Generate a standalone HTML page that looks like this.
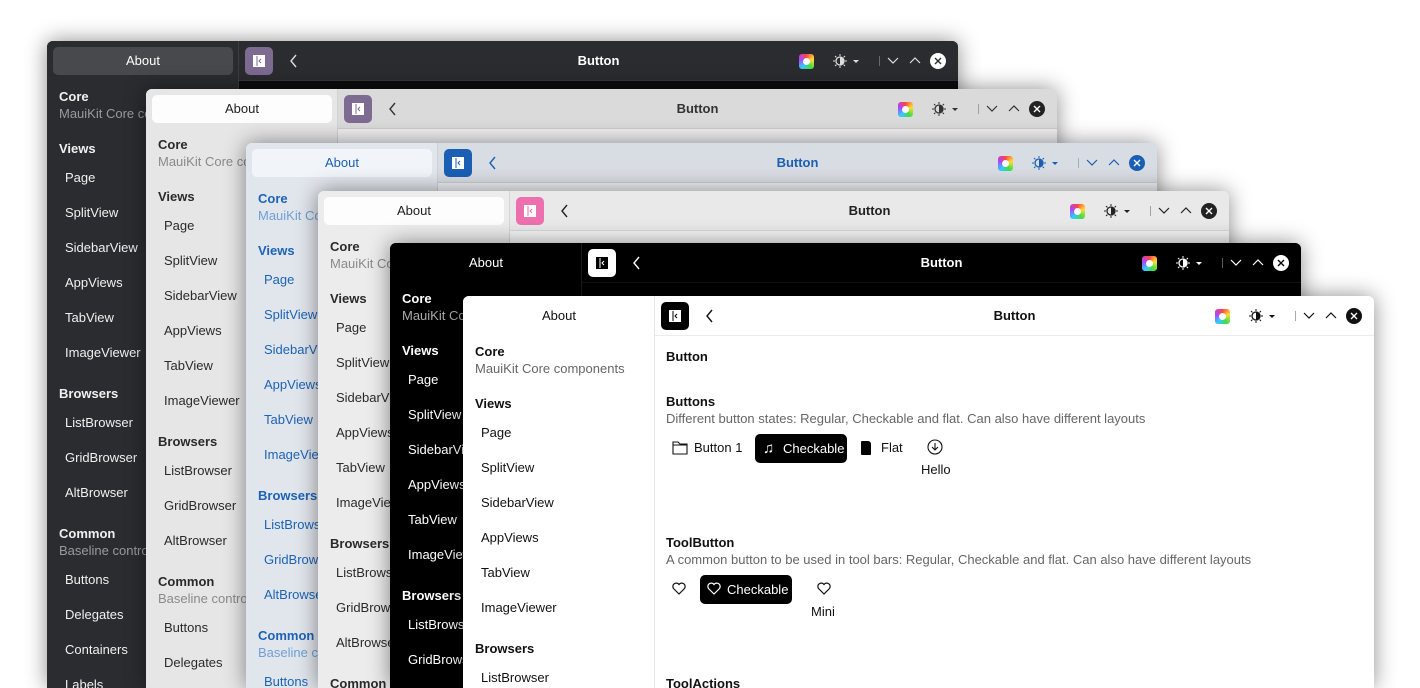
<!DOCTYPE html>
<html style="width:1420px;height:688px;overflow:hidden"><head><meta charset="utf-8"><style>
*{box-sizing:border-box;margin:0;padding:0}
body{width:1420px;height:688px;background:#fff;position:relative;overflow:hidden;font-family:"Liberation Sans","Noto Sans CJK SC",sans-serif;font-size:13px}
.win{position:absolute;width:911px;border-radius:6px 6px 0 0;overflow:hidden;box-shadow:0 0 22px rgba(0,0,0,.45)}
.side{position:absolute;left:0;top:0;width:192px;bottom:0;overflow:hidden}
.main{position:absolute;left:192px;right:0;top:0;bottom:0;overflow:hidden}
.hdr{position:absolute;left:0;right:0;top:0;height:40px}
.about{position:absolute;left:6px;top:6px;width:180px;height:28px;border-radius:5px;text-align:center;line-height:28px}
.t{position:absolute;white-space:nowrap}
.tog{position:absolute;left:6px;top:6px;width:28px;height:28px;border-radius:5px}
.btn1{position:absolute;border-radius:5px;background:#000;color:#fff;height:29px;line-height:29px}
</style></head><body>
<div id="root"></div>
<script>
var items=[["h","Core",56],["s","MauiKit Core components",73],["h","Views",108],["i","Page",137],["i","SplitView",172],["i","SidebarView",207],["i","AppViews",242],["i","TabView",277],["i","ImageViewer",312],["h","Browsers",353],["i","ListBrowser",382],["i","GridBrowser",417],["i","AltBrowser",452],["h","Common",493],["s","Baseline controls",510],["i","Buttons",539],["i","Delegates",574],["i","Containers",609],["i","Labels",644]];
var W=[
{x:47,y:41,side:"#2b2c30",hdr:"#2b2c30",main:"#0c0c0e",ab:"#47494d",abt:"#fff",tx:"#f0f0f0",sub:"#9a9a9e",tog:"#7e6b92",ttl:"#fff",ic:"#ddd",close:"#fff",closeX:"#2b2c30"},
{x:146,y:89,side:"#e6e6e6",hdr:"#dadada",main:"#efefef",ab:"#fdfdfd",abt:"#222",tx:"#2a2a2a",sub:"#8a8a8a",tog:"#7e6b92",ttl:"#333",ic:"#333",close:"#222",closeX:"#fff"},
{x:246,y:143,side:"#e1e6ec",hdr:"#d8dde3",main:"#eef1f4",ab:"#f1f5fa",abt:"#1a5fb4",tx:"#1c63b7",sub:"#6f9fd6",tog:"#1a5fb4",ttl:"#1a5fb4",ic:"#1a5fb4",close:"#1a5fb4",closeX:"#fff"},
{x:318,y:191,side:"#ececed",hdr:"#e9e9ea",main:"#f5f5f5",ab:"#fdfdfd",abt:"#222",tx:"#2a2a2a",sub:"#8a8a8a",tog:"#ee6fae",ttl:"#222",ic:"#222",close:"#222",closeX:"#fff"},
{x:390,y:243,side:"#000",hdr:"#000",main:"#000",ab:"#000",abt:"#fff",tx:"#fff",sub:"#aaa",tog:"#fff",ttl:"#fff",ic:"#fff",close:"#fff",closeX:"#000",togi:"#000",togc:"#fff"},
{x:463,y:296,side:"#fff",hdr:"#fff",main:"#fff",ab:"#fff",abt:"#111",tx:"#111",sub:"#666",tog:"#000",ttl:"#111",ic:"#111",close:"#111",closeX:"#fff"}];
var h="";
W.forEach(function(w,k){
 var s='<div class="win" style="left:'+w.x+'px;top:'+w.y+'px;height:'+(688-w.y)+'px;background:'+w.main+'">';
 s+='<div class="side" style="background:'+w.side+';border-right:1px solid rgba(128,128,128,.2)"><div class="about" style="background:'+w.ab+';color:'+w.abt+'">About</div>';
 items.forEach(function(it){
  var l=it[0]=="i"?18:12,c=it[0]=="s"?w.sub:w.tx,fw=it[0]=="h"?"bold":"normal";
  s+='<div class="t" style="left:'+l+'px;top:'+(it[2]-8)+'px;color:'+c+';font-weight:'+fw+'">'+it[1]+'</div>';
 });
 s+='</div><div class="main"><div class="hdr" style="background:'+w.hdr+';border-bottom:1px solid rgba(128,128,128,.15)">';
 s+='<div class="tog" style="background:'+w.tog+'"><svg style="position:absolute;left:8px;top:8px" width="12" height="12"><rect width="12" height="12" fill="'+(w.togi||"#fff")+'"/><path d="M4 1v10" stroke="'+(w.togc||w.tog)+'" stroke-width="1"/><path d="M8 4L6 6l2 2" fill="none" stroke="'+(w.togc||w.tog)+'" stroke-width="1"/></svg></div>';
 s+='<svg style="position:absolute;left:50px;top:13px" width="10" height="14"><path d="M7 1L2 7l5 6" fill="none" stroke="'+w.ic+'" stroke-width="1.4"/></svg>';
 s+='<div class="t" style="left:0;right:0;text-align:center;top:12px;font-weight:bold;color:'+w.ttl+'">Button</div>';
 s+='<div style="position:absolute;right:144px;top:13px;width:15px;height:15px;border-radius:3px;background:conic-gradient(#f44,#fd3,#4d4,#3cf,#a4f,#f44)"><div style="position:absolute;left:4px;top:4px;width:7px;height:7px;border-radius:50%;background:#fff"></div></div>';
 s+='<svg style="position:absolute;right:95px;top:13px" width="30" height="14"><circle cx="7" cy="7" r="4" fill="none" stroke="'+w.ic+'" stroke-width="1.3"/><path d="M7 3v8a4 4 0 0 0 0-8" fill="'+w.ic+'"/><path d="M7 0v2M7 12v2M0 7h2M12 7h2M2 2l1.4 1.4M10.6 10.6L12 12M2 12l1.4-1.4M10.6 3.4L12 2" stroke="'+w.ic+'" stroke-width="1"/><path d="M20 6h6l-3 3z" fill="'+w.ic+'"/></svg>';
 s+='<div style="position:absolute;right:78px;top:15px;width:1px;height:10px;background:'+w.ic+';opacity:.35"></div>';
 s+='<svg style="position:absolute;right:37px;top:14px" width="34" height="12"><path d="M1 3l5 5 5-5M23 8l5-5 5 5" fill="none" stroke="'+w.ic+'" stroke-width="1.2"/></svg>';
 s+='<svg style="position:absolute;right:12px;top:12px" width="16" height="16"><circle cx="8" cy="8" r="8" fill="'+w.close+'"/><path d="M5 5l6 6M11 5l-6 6" stroke="'+w.closeX+'" stroke-width="1.4"/></svg>';
 s+='</div>';
 if(k==5){
  var b='';
  b+='<div class="t" style="left:11px;top:53px;font-weight:bold">Button</div>';
  b+='<div class="t" style="left:11px;top:98px;font-weight:bold">Buttons</div>';
  b+='<div class="t" style="left:11px;top:115px;color:#666">Different button states: Regular, Checkable and flat. Can also have different layouts</div>';
  b+='<svg style="position:absolute;left:17px;top:145px" width="16" height="14"><path d="M1 1h5l2 2h7v10H1z M1 4h14" fill="none" stroke="#111" stroke-width="1.1"/></svg>';
  b+='<div class="t" style="left:39px;top:144px">Button 1</div>';
  b+='<div class="btn1" style="left:100px;top:138px;width:92px"><span style="position:absolute;left:8px;font-size:15px">♫</span><span style="position:absolute;left:28px">Checkable</span></div>';
  b+='<div style="position:absolute;left:206px;top:145px;width:10px;height:14px;background:#000;border-radius:1px 3px 1px 1px"></div>';
  b+='<div class="t" style="left:226px;top:144px">Flat</div>';
  b+='<svg style="position:absolute;left:272px;top:143px" width="16" height="16"><circle cx="8" cy="8" r="7" fill="none" stroke="#111" stroke-width="1.1"/><path d="M8 4v7M5 8l3 3 3-3" fill="none" stroke="#111" stroke-width="1.1"/></svg>';
  b+='<div class="t" style="left:266px;top:166px">Hello</div>';
  b+='<div class="t" style="left:11px;top:239px;font-weight:bold">ToolButton</div>';
  b+='<div class="t" style="left:11px;top:256px;color:#666">A common button to be used in tool bars: Regular, Checkable and flat. Can also have different layouts</div>';
  var heart=function(x,y,c){return '<svg style="position:absolute;left:'+x+'px;top:'+y+'px" width="14" height="13"><path d="M7 12L1.5 6.5A3.2 3.2 0 0 1 7 2.5a3.2 3.2 0 0 1 5.5 4z" fill="none" stroke="'+c+'" stroke-width="1.2"/></svg>';};
  b+=heart(17,286,"#111");
  b+='<div class="btn1" style="left:45px;top:279px;width:92px"></div>'+heart(52,286,"#fff")+'<div class="t" style="left:72px;top:286px;color:#fff">Checkable</div>';
  b+=heart(162,286,"#111");
  b+='<div class="t" style="left:156px;top:308px">Mini</div>';
  b+='<div class="t" style="left:11px;top:380px;font-weight:bold">ToolActions</div>';
  s+='<div style="position:absolute;left:0;top:0;right:0;bottom:0;color:#111">'+b+'</div>';
 }
 s+='</div></div>';
 h+=s;
});
document.getElementById("root").innerHTML=h;
</script>
</body></html>
